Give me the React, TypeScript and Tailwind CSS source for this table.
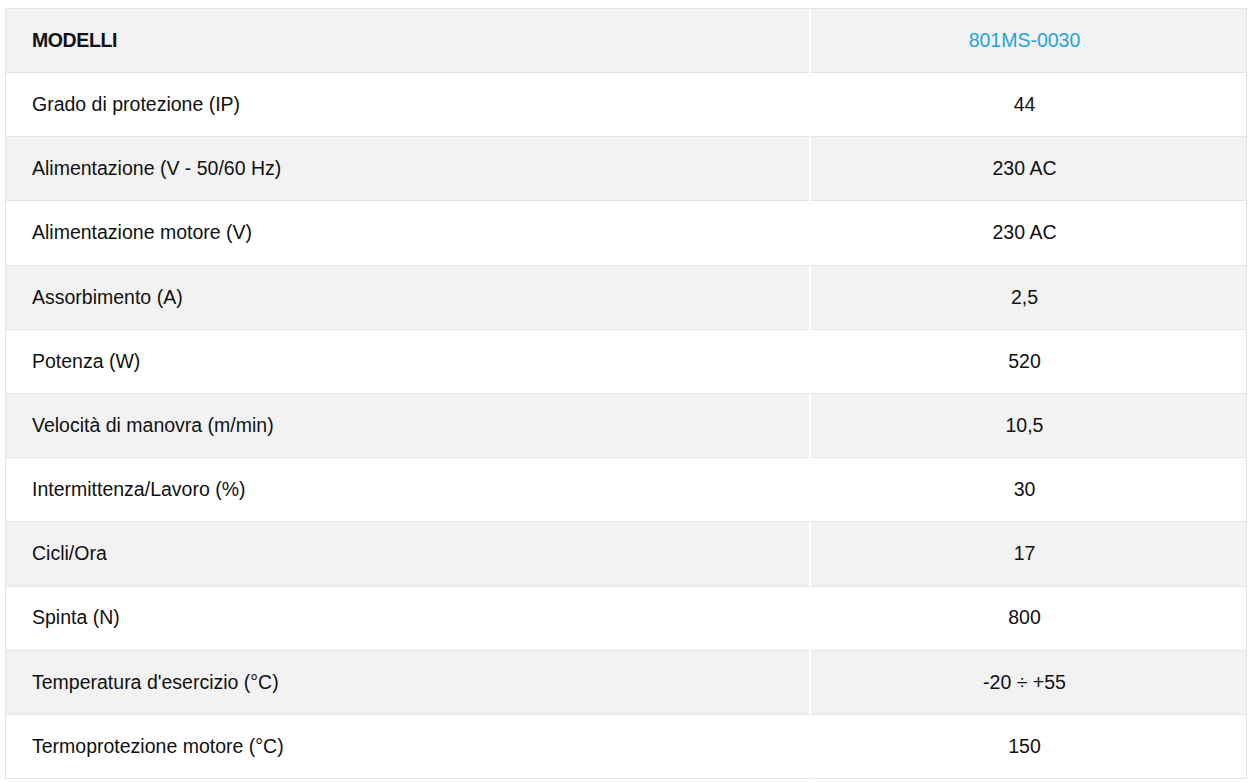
const rows: [string, string][] = [
  ["Grado di protezione (IP)", "44"],
  ["Alimentazione (V - 50/60 Hz)", "230 AC"],
  ["Alimentazione motore (V)", "230 AC"],
  ["Assorbimento (A)", "2,5"],
  ["Potenza (W)", "520"],
  ["Velocità di manovra (m/min)", "10,5"],
  ["Intermittenza/Lavoro (%)", "30"],
  ["Cicli/Ora", "17"],
  ["Spinta (N)", "800"],
  ["Temperatura d'esercizio (°C)", "-20 ÷ +55"],
  ["Termoprotezione motore (°C)", "150"],
];

export default function App() {
  return (
    <div className="w-[1252px] h-[783px] bg-white pt-[8px] pl-[5px] font-['Liberation_Sans',Arial,sans-serif] text-[19.5px] text-[#111]">
      <div className="w-[1242px] border-t border-l border-r border-[#e4e4e4]">
        {/* header */}
        <div className="grid grid-cols-[803px_1fr] gap-x-[2px] bg-white">
          <div className="h-[64px] flex items-center pl-[26px] bg-[#f2f2f2] border-b border-[#e4e4e4] font-bold tracking-[-0.4px]">
            MODELLI
          </div>
          <div className="h-[64px] flex items-center justify-center pr-[8px] bg-[#f2f2f2] border-b border-[#e4e4e4] text-[#1ea5dc]">
            801MS-0030
          </div>
        </div>
        {rows.map(([label, value], i) => {
          const bg = i % 2 === 1 ? "bg-[#f2f2f2]" : "bg-white";
          return (
            <div key={label} className="grid grid-cols-[803px_1fr] gap-x-[2px] bg-white">
              <div className={`h-[64.2px] flex items-center pl-[26px] border-b border-[#e4e4e4] ${bg}`}>
                {label}
              </div>
              <div className={`h-[64.2px] flex items-center justify-center pr-[8px] border-b border-[#e4e4e4] ${bg}`}>
                {value}
              </div>
            </div>
          );
        })}
      </div>
    </div>
  );
}
